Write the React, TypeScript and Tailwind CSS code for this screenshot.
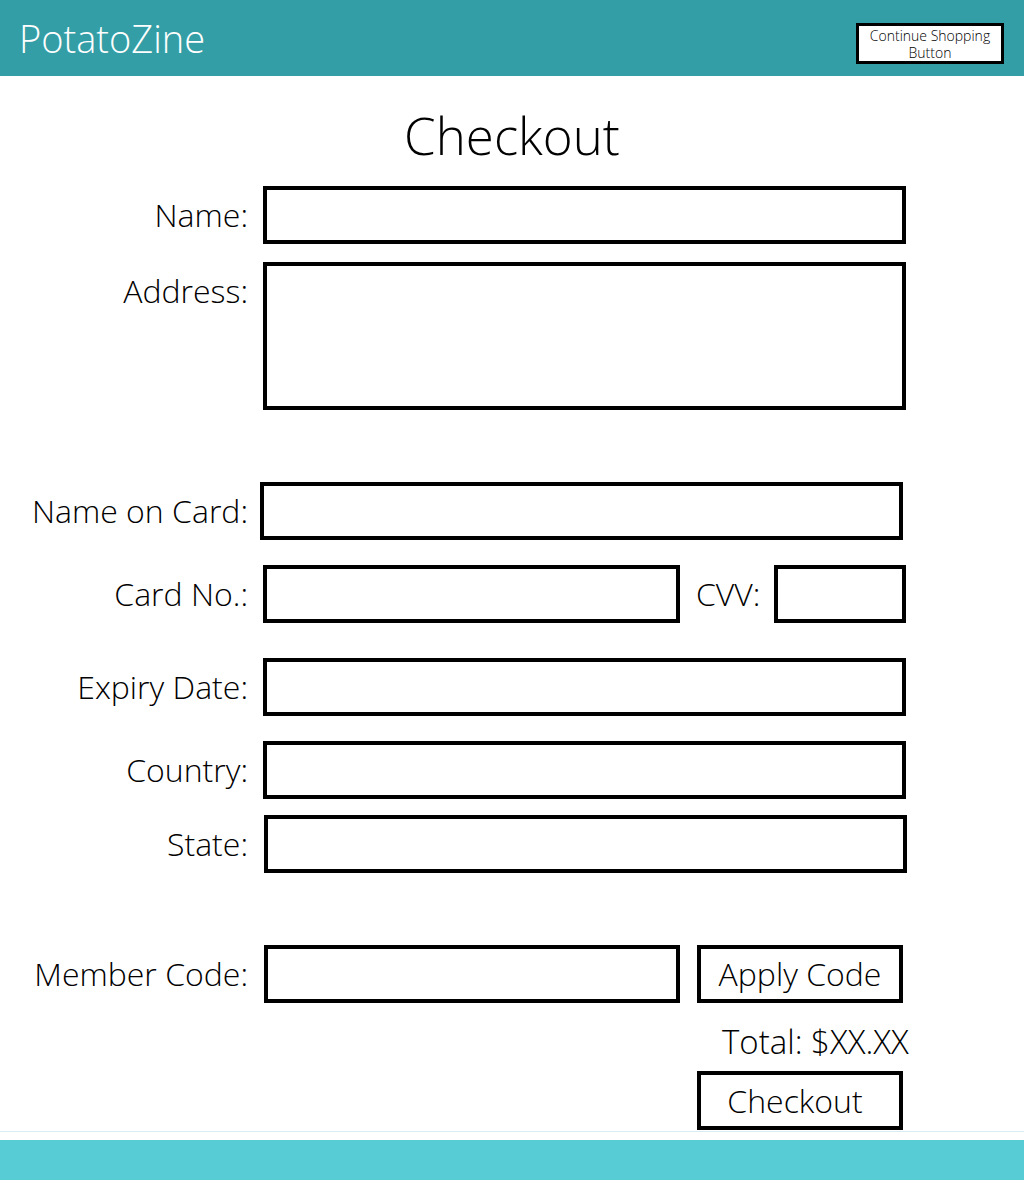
const FONT = "font-['Open_Sans','Noto_Sans',sans-serif]"

function Label({ text, className = "" }: { text: string; className?: string }) {
  return (
    <label className={`w-[250px] shrink-0 pr-[2px] text-right text-[32px] font-light leading-none text-black ${className}`}>
      {text}
    </label>
  )
}

function Box({ className = "" }: { className?: string }) {
  return <div className={`h-[58px] shrink-0 border-4 border-black bg-white ${className}`} />
}

export default function App() {
  return (
    <div className={`flex h-[1180px] flex-col overflow-hidden bg-white ${FONT}`}>
      <header className="flex h-[76px] shrink-0 items-center justify-between bg-[#339ea6] pl-[19px] pr-[20px]">
        <span className="text-[38px] font-light leading-none text-white">PotatoZine</span>
        <button className="mt-[11px] flex h-[41px] w-[148px] flex-col items-center justify-center border-[3px] border-black bg-white pt-[1px] text-[14px] font-light leading-[17px] text-black">
          <span>Continue Shopping</span>
          <span>Button</span>
        </button>
      </header>

      <main className="flex flex-1 flex-col">
        <h1 className="mt-[30px] text-center text-[51px] font-light leading-[58px] text-black">Checkout</h1>

        <div className="mt-[22px] flex h-[58px] items-center gap-[13px]">
          <Label text="Name:" />
          <Box className="w-[643px]" />
        </div>

        <div className="mt-[18px] flex items-start gap-[13px]">
          <Label text="Address:" className="pt-[13px]" />
          <div className="h-[148px] w-[643px] border-4 border-black bg-white" />
        </div>

        <div className="mt-[72px] flex h-[57px] items-center gap-[10px]">
          <Label text="Name on Card:" />
          <Box className="h-[57px] w-[643px]" />
        </div>

        <div className="mt-[26px] flex h-[57px] items-center">
          <Label text="Card No.:" />
          <Box className="ml-[13px] h-[57px] w-[417px]" />
          <span className="ml-[16px] shrink-0 text-[32px] font-light leading-none">CVV:</span>
          <Box className="ml-[14px] h-[57px] w-[132px]" />
        </div>

        <div className="mt-[36px] flex h-[58px] items-center gap-[13px]">
          <Label text="Expiry Date:" />
          <Box className="w-[643px]" />
        </div>

        <div className="mt-[25px] flex h-[57px] items-center gap-[13px]">
          <Label text="Country:" />
          <Box className="h-[57px] w-[643px]" />
        </div>

        <div className="mt-[17px] flex h-[58px] items-center gap-[14px]">
          <Label text="State:" />
          <Box className="w-[643px]" />
        </div>

        <div className="mt-[72px] flex h-[58px] items-center">
          <Label text="Member Code:" />
          <Box className="ml-[14px] w-[416px]" />
          <button className="ml-[17px] h-[58px] w-[206px] border-4 border-black bg-white text-[32px] font-light leading-none">
            Apply Code
          </button>
        </div>

        <div className="ml-[722px] mt-[20px] text-[33px] font-light leading-[38px]">Total: $XX.XX</div>

        <button className="ml-[697px] mt-[10px] h-[59px] w-[206px] border-4 border-black bg-white pr-[10px] text-[32px] font-light leading-none">
          Checkout
        </button>
      </main>

      <footer className="shrink-0 border-t border-[#d6eef1] pt-[8px]">
        <div className="h-[40px] bg-[#57ccd5]" />
      </footer>
    </div>
  )
}
